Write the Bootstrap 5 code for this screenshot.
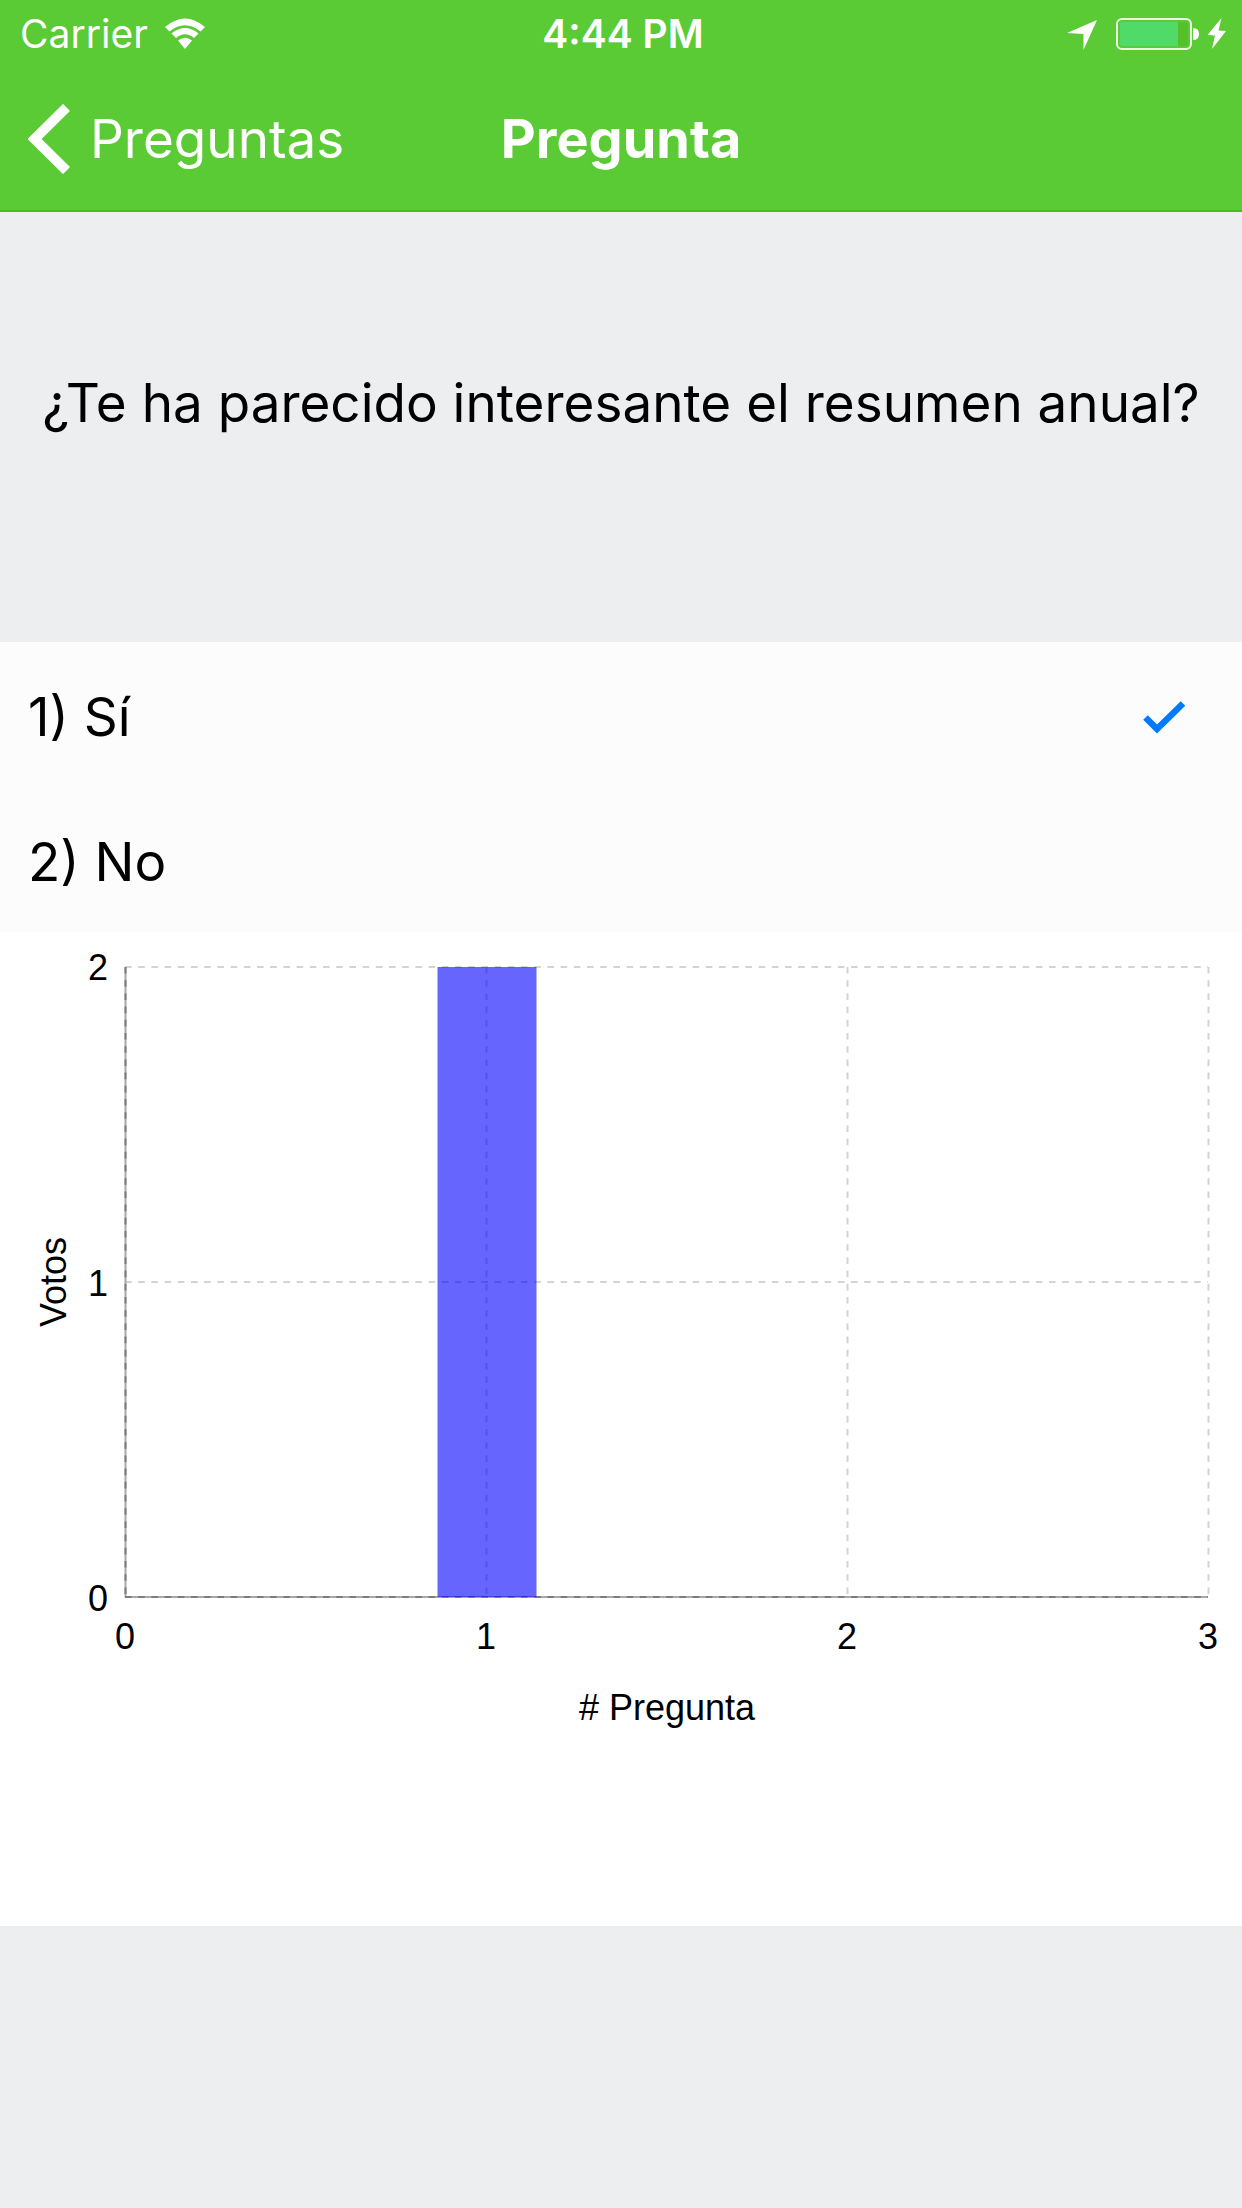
<!DOCTYPE html>
<html lang="es">
<head>
<meta charset="utf-8">
<meta name="viewport" content="width=device-width, initial-scale=1">
<title>Pregunta</title>
<link href="https://cdn.jsdelivr.net/npm/bootstrap@5.3.0/dist/css/bootstrap.min.css" rel="stylesheet">
<style>
body { background: #eceef0; color: #000; font-family: Inter, "Liberation Sans", sans-serif; font-size: 53px; line-height: 64px; }
.app-header { background: #5aca35; color: #fff; border-bottom: 2px solid #43c316; }
.status-row { height: 68px; padding: 0 16px 0 20px; font-size: 39px; line-height: 46px; }
.status-row .side-group, .title-row .side-group { flex: 1 1 0; }
.title-row { height: 142px; padding: 0 28px; }
.back-link { gap: 20px; }
.screen-title { font-size: 54px; line-height: 64px; font-weight: 700; }
.question-panel { min-height: 430px; padding: 0 24px 48px; }
.question-text { font-size: 53px; line-height: 64px; font-weight: 400; }
.answers { --bs-list-group-bg: #fcfcfc; --bs-list-group-color: #000; }
.answer-row { height: 145px; padding: 4px 56px 0 28px; cursor: pointer; }
.answer-row svg { display: none; }
.btn-check:checked ~ svg { display: block; }
.results { padding-bottom: 154px; }
.results svg { width: 100%; height: auto; }
.results text { font-family: "Liberation Sans", Arial, sans-serif; font-size: 36px; }
</style>
</head>
<body>
<header class="app-header">
  <div class="status-row d-flex align-items-center">
    <div class="side-group d-flex align-items-center gap-3">
      <span>Carrier</span>
      <svg width="42" height="32" viewBox="0 0 42 32" fill="#fff" aria-hidden="true">
        <path d="M1 9Q21-8 41 9L36.500 13.500Q21 1 5.500 13.500Z"/>
        <path d="M7.500 15.500Q21 4.500 34.500 15.500L30 20Q21 12.500 12 20Z"/>
        <path d="M14 22.500Q21 17 28 22.500L21 31Z"/>
      </svg>
    </div>
    <span class="fw-semibold">4:44 PM</span>
    <div class="side-group d-flex align-items-center justify-content-end">
      <svg width="160" height="34" viewBox="0 0 160 34" aria-hidden="true">
        <path d="M1 16L31 3L17.500 33V17Z" fill="#fff"/>
        <rect x="51" y="2" width="74" height="30" rx="5" fill="none" stroke="#e9f9e2" stroke-width="2"/>
        <path d="M56 5H112V29H56Q54 29 54 27V7Q54 5 56 5Z" fill="#50db68"/>
        <path d="M112 5H120Q122 5 122 7V27Q122 29 120 29H112Z" fill="#56c02b"/>
        <path d="M127 11Q133 11 133 17T127 23Z" fill="#fff"/>
        <path d="M155.500 1L141.500 18L149 18.500L146 32L160 14L152.500 13.500Z" fill="#fff"/>
      </svg>
    </div>
  </div>
  <nav class="title-row d-flex align-items-center" aria-label="Principal">
    <div class="side-group d-flex">
      <a href="#" class="back-link d-flex align-items-center text-white text-decoration-none">
        <svg width="42" height="70" viewBox="0 0 42 70" aria-hidden="true"><path d="M38.500 3.500L6.500 35L38.500 66.500" fill="none" stroke="#fff" stroke-width="10"/></svg>
        <span>Preguntas</span>
      </a>
    </div>
    <h1 class="screen-title m-0">Pregunta</h1>
    <div class="side-group"></div>
  </nav>
</header>
<main>
  <section class="question-panel d-flex align-items-center justify-content-center text-center">
    <h2 class="question-text m-0" id="question">¿Te ha parecido interesante el resumen anual?</h2>
  </section>
  <div class="answers list-group list-group-flush" role="radiogroup" aria-labelledby="question">
    <label class="answer-row list-group-item border-0 d-flex align-items-center justify-content-between">
      <input class="btn-check" type="radio" name="answer" value="1" checked>
      <span>1) Sí</span>
      <svg width="44" height="36" viewBox="0 0 44 36" aria-hidden="true"><path d="M3.500 18.500L15 30L41 4.500" fill="none" stroke="#007aff" stroke-width="6.500"/></svg>
    </label>
    <label class="answer-row list-group-item border-0 d-flex align-items-center justify-content-between">
      <input class="btn-check" type="radio" name="answer" value="2">
      <span>2) No</span>
      <svg width="44" height="36" viewBox="0 0 44 36" aria-hidden="true"><path d="M3.500 18.500L15 30L41 4.500" fill="none" stroke="#007aff" stroke-width="6.500"/></svg>
    </label>
  </div>
  <section class="results bg-white">
    <svg class="d-block" viewBox="0 0 1242 840" role="img" aria-label="Votos por pregunta">
      <g fill="none" stroke="#d3d3d3" stroke-width="2" stroke-dasharray="6.600 6.600">
        <path d="M125 35H1208M125 350H1208"/>
        <path d="M486.500 35V665M847.500 35V665M1208.500 35V665"/>
      </g>
      <path d="M125.500 35V665M125 665H1208" fill="none" stroke="#a8a8a8" stroke-width="2"/>
      <path d="M125.500 35V665M125 665H1208" fill="none" stroke="#7c7c7c" stroke-width="2" stroke-dasharray="6.600 6.600"/>
      <rect x="437.500" y="35" width="99" height="630" fill="#00f" fill-opacity=".6"/>
      <g text-anchor="end">
        <text x="108" y="48">2</text>
        <text x="108" y="364">1</text>
        <text x="108" y="679">0</text>
      </g>
      <g text-anchor="middle">
        <text x="125" y="717">0</text>
        <text x="486" y="717">1</text>
        <text x="847" y="717">2</text>
        <text x="1208" y="717">3</text>
        <text x="667" y="788">#&#32;Pregunta</text>
        <text transform="translate(66 350) rotate(-90)">Votos</text>
      </g>
    </svg>
  </section>
</main>
<script src="https://cdn.jsdelivr.net/npm/bootstrap@5.3.0/dist/js/bootstrap.bundle.min.js"></script>
</body>
</html>
